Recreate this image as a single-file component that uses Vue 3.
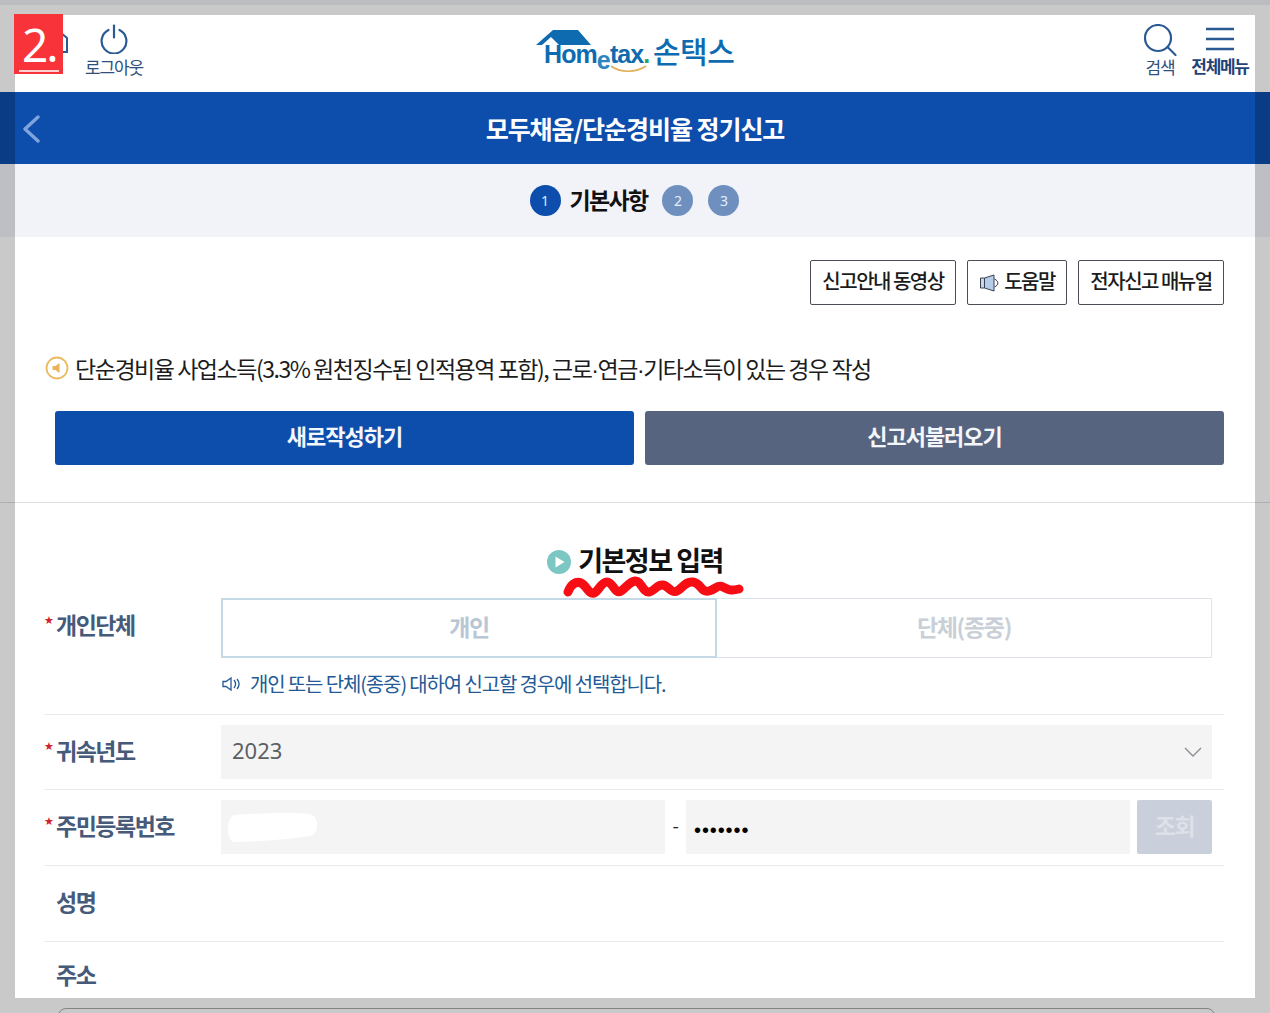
<script setup>
const guideButtons = [
  { label: '신고안내 동영상', width: 146 },
  { label: '도움말', width: 100, icon: true },
  { label: '전자신고 매뉴얼', width: 146 },
]
const steps = [2, 3]
</script>

<template>
  <div class="screen">
    <header class="top">
      <div class="top-left">
        <div class="tool home">
          <svg width="36" height="32" viewBox="0 0 36 32" fill="none" stroke="#2b5a93" stroke-width="2"><path d="M6 14 18 4l12 10v14H6z" /></svg>
        </div>
        <div class="tool logout">
          <svg width="28" height="30" viewBox="0 0 28 30" fill="none" stroke="#2b5a93" stroke-width="2.200" stroke-linecap="round"><path d="M8.500 6a12.400 12.400 0 1 0 11 0" /><path d="M14 1.500v12" /></svg>
          <span>로그아웃</span>
        </div>
      </div>
      <div class="logo">
        <svg class="roof" width="60" height="20" viewBox="0 0 60 20"><path d="M1 16 18 1h25l13 15H24l-8-8-9 8z" fill="#0f6bb0" /></svg>
        <span class="logo-word">Hom<i>e</i>tax<b>.</b></span>
        <svg class="smile" width="40" height="10" viewBox="0 0 40 10" fill="none"><path d="M2 2c9 7 25 7 35 0" stroke="#e3ae5a" stroke-width="1.600" /></svg>
        <span class="logo-ko">손택스</span>
      </div>
      <div class="top-right">
        <div class="tool search">
          <svg width="34" height="32" viewBox="0 0 34 32" fill="none" stroke="#2b5a93" stroke-width="2.200" stroke-linecap="round"><circle cx="15" cy="14" r="13" /><path d="m24.500 23 8 8" /></svg>
          <span>검색</span>
        </div>
        <div class="tool menu">
          <svg width="30" height="26" viewBox="0 0 30 26" stroke="#2b5a93" stroke-width="2.400"><path d="M1 3h28M1 13h28M1 23h28" /></svg>
          <span class="strong">전체메뉴</span>
        </div>
      </div>
    </header>

    <div class="titlebar">
      <svg class="back" width="18" height="30" viewBox="0 0 18 30" fill="none" stroke="#7ea3dd" stroke-width="3.400" stroke-linecap="round" stroke-linejoin="round"><path d="M16 3 3 15l13 12" /></svg>
      <h1>모두채움/단순경비율 정기신고</h1>
    </div>

    <div class="steps">
      <span class="dot active">1</span>
      <strong>기본사항</strong>
      <span v-for="n in steps" :key="n" class="dot">{{ n }}</span>
    </div>

    <div class="guide">
      <button v-for="b in guideButtons" :key="b.label" class="guide-btn" :style="{ width: b.width + 'px' }">
        <svg v-if="b.icon" class="guide-icon" width="22" height="22" viewBox="0 0 22 22"><path d="M1.500 6h4v10h-4z" fill="#c6d8ee" stroke="#3a4250" /><path d="M5.500 6 15 3v16l-9.500-3z" fill="#b5cdea" stroke="#3a4250" /><path d="M15.500 7c4.500 2 4.500 6 0 8" fill="none" stroke="#3a4250" /></svg>
        {{ b.label }}
      </button>
    </div>

    <p class="notice">
      <svg width="24" height="24" viewBox="0 0 24 24"><circle cx="12" cy="12" r="10.500" fill="#fff" stroke="#e9bb63" stroke-width="1.800" /><path d="M7.500 10h3l4-3v10l-4-3h-3z" fill="#e9b458" /></svg>
      <span>단순경비율 사업소득(3.3% 원천징수된 인적용역 포함), 근로<i class="mid">·</i>연금<i class="mid">·</i>기타소득이 있는 경우 작성</span>
    </p>

    <div class="actions">
      <button class="primary">새로작성하기</button>
      <button class="secondary">신고서불러오기</button>
    </div>

    <section class="form">
      <h2>
        <svg width="24" height="24" viewBox="0 0 24 24"><circle cx="12" cy="12" r="12" fill="#7cc7c3" /><path d="M8.500 6.500 17.500 12l-9 5.500z" fill="#fff" /></svg>
        기본정보 입력
        <svg class="squiggle" width="184" height="24" viewBox="0 0 184 24" fill="none"><path d="M5 16C8 8 13 5 18 7S26 19 31 17 38 6 44 6 52 19 58 15 66 6 72 5 80 17 86 16 94 8 100 9 108 18 114 15 122 5 130 6 138 17 146 15 154 8 160 11 168 15 176 13" stroke="#f70d14" stroke-width="9" stroke-linecap="round" stroke-linejoin="round" /></svg>
      </h2>

      <div class="row type-row">
        <label class="req">개인단체</label>
        <div class="field-col">
          <div class="toggle">
            <button class="on">개인</button>
            <button>단체(종중)</button>
          </div>
          <p class="hint">
            <svg width="20" height="16" viewBox="0 0 20 16" fill="none" stroke="#245a96" stroke-width="1.300"><path d="M2 5.500h3l5-3.500v12l-5-3.500H2z" /><path d="M13 4c2 2.500 2 5.500 0 8M16 3c2.500 3 2.500 7 0 10" /></svg>
            개인 또는 단체(종중) 대하여 신고할 경우에 선택합니다.
          </p>
        </div>
      </div>

      <div class="row">
        <label class="req">귀속년도</label>
        <div class="select">
          <span>2023</span>
          <svg width="20" height="12" viewBox="0 0 20 12" fill="none" stroke="#8a8f96" stroke-width="1.400"><path d="m2 2 8 8 8-8" /></svg>
        </div>
      </div>

      <div class="row tall">
        <label class="req">주민등록번호</label>
        <div class="id-fields">
          <div class="input first">
            <svg class="blot" width="92" height="32" viewBox="0 0 92 32"><path d="M6 4c24-2 60-3 76-1 10 2 11 17 2 22-22 3-54 6-78 6-7-6-7-20 0-27z" fill="#fff" /></svg>
          </div>
          <span class="dash">-</span>
          <div class="input second">•••••••</div>
          <button class="lookup">조회</button>
        </div>
      </div>

      <div class="row tall"><label>성명</label></div>
      <div class="row last"><label>주소</label></div>
    </section>

    <div class="bottom-outline"></div>

    <div class="scrim scrim-top"></div>
    <div class="scrim scrim-left"></div>
    <div class="scrim scrim-right"></div>
    <div class="scrim scrim-bottom"></div>
    <div class="top-band"></div>
    <div class="badge"><span>2.</span></div>
  </div>
</template>

<style>
html, body { margin: 0; overflow: hidden; background: #fff; }
</style>

<style scoped>
.screen {
  position: relative;
  width: 1270px;
  height: 1013px;
  overflow: hidden;
  background: #fff;
  font-family: "Noto Sans CJK KR", "Noto Sans", sans-serif;
  color: #1a1a1a;
}
button { font-family: inherit; cursor: pointer; }
.top {
  height: 92px;
  box-sizing: border-box;
  padding: 15px 15px 0;
  display: flex;
  align-items: center;
  justify-content: space-between;
  position: relative;
}
.top-left, .top-right { display: flex; height: 77px; }
.tool {
  display: flex;
  flex-direction: column;
  align-items: center;
  padding-top: 9px;
  font-size: 17px;
  line-height: 20px;
  letter-spacing: -1.100px;
  color: #2f4f7c;
  box-sizing: border-box;
  white-space: nowrap;
}
.tool svg { display: block; }
.home { width: 52px; margin-left: 14px; }
.logout { width: 64px; margin-left: 1px; padding-top: 9px; }
.logout span { margin-top: 3px; }
.search { width: 36px; margin-right: 12px; padding-top: 9px; }
.search span { margin-top: 1px; }
.menu { width: 60px; margin-right: 5px; padding-top: 11px; }
.menu span { margin-top: 4px; }
.strong { font-weight: 700; letter-spacing: -1.300px; color: #1f4278; }

.logo {
  position: absolute;
  left: 534px;
  top: 29px;
  width: 204px;
  height: 46px;
  color: #0f6bb0;
}
.roof { position: absolute; left: 1px; top: 0; }
.logo-word {
  position: absolute;
  left: 10px;
  top: 11px;
  font-family: "Liberation Sans", sans-serif;
  font-size: 25px;
  line-height: 28px;
  font-weight: 700;
  letter-spacing: -0.900px;
  white-space: nowrap;
}
.logo-word i { font-style: normal; position: relative; top: 6px; color: #2c85c0; }
.logo-word b { color: #2aa35f; }
.smile { position: absolute; left: 75px; top: 35px; }
.logo-ko {
  position: absolute;
  left: 119px;
  top: 1px;
  font-size: 30px;
  line-height: 40px;
  font-weight: 500;
  letter-spacing: -0.500px;
  white-space: nowrap;
}

.titlebar {
  height: 72px;
  background: #0d4dab;
  display: flex;
  align-items: center;
  justify-content: center;
  position: relative;
}
.back { position: absolute; left: 22px; top: 22px; }
h1 {
  margin: 0;
  font-size: 25px;
  font-weight: 700;
  letter-spacing: -1.050px;
  color: #fff;
  line-height: 1;
}

.steps {
  height: 73px;
  background: #f1f3f9;
  display: flex;
  align-items: center;
  justify-content: center;
  padding-right: 1px;
}
.dot {
  width: 31px;
  height: 31px;
  border-radius: 50%;
  background: #6f90bf;
  color: #e6edf7;
  font-size: 14px;
  display: flex;
  align-items: center;
  justify-content: center;
  margin-left: 15px;
  font-family: "Noto Sans", sans-serif;
}
.dot.active { background: #0d4dab; color: #dfe9f8; margin-left: 0; }
.steps strong {
  font-size: 23px;
  font-weight: 700;
  letter-spacing: -1.700px;
  color: #111;
  margin-left: 9px;
  padding-bottom: 4px;
}

.guide {
  display: flex;
  justify-content: flex-end;
  gap: 11px;
  padding: 23px 46px 0 0;
}
.guide-btn {
  height: 45px;
  box-sizing: border-box;
  background: #fff;
  border: 1px solid #4a4f57;
  border-radius: 2px;
  padding: 0 0 4px;
  font-size: 20px;
  font-weight: 500;
  letter-spacing: -1.500px;
  color: #1c1c1c;
  display: flex;
  align-items: center;
  justify-content: center;
  gap: 3px;
}
.guide-icon { margin-top: 4px; }

.notice {
  margin: 44px 0 0 45px;
  height: 38px;
  display: flex;
  align-items: center;
  gap: 6px;
  font-size: 23px;
  letter-spacing: -1.470px;
  color: #1c1c1c;
  white-space: nowrap;
}
.mid {
  font-style: normal;
  font-family: "Liberation Sans", sans-serif;
}

.actions {
  display: flex;
  gap: 11px;
  padding: 24px 46px 0 55px;
  box-sizing: border-box;
  height: 78px;
}
.actions button {
  flex: 1;
  height: 54px;
  border: 0;
  border-radius: 3px;
  color: #f3f6fb;
  font-size: 22px;
  font-weight: 700;
  letter-spacing: -1px;
  padding: 0 0 7px;
}
.primary { background: #0d4dab; }
.secondary { background: #56647f; }

.form {
  margin-top: 37px;
  border-top: 1px solid #d9dee2;
  padding: 0 46px 0 44px;
}
h2 {
  position: relative;
  margin: 37px 0 0;
  height: 58px;
  box-sizing: border-box;
  padding-left: 2px;
  display: flex;
  justify-content: center;
  align-items: flex-start;
  gap: 7px;
  font-size: 27px;
  line-height: 40px;
  font-weight: 700;
  letter-spacing: -1.500px;
  color: #111;
}
h2 > svg:first-child { margin-top: 10px; }
.squiggle { position: absolute; left: 519px; top: 36px; }

.row {
  display: flex;
  align-items: center;
  border-bottom: 1px solid #e9ebee;
  min-height: 75px;
  box-sizing: border-box;
}
.tall { min-height: 76px; }
.row label {
  width: 177px;
  flex: none;
  font-size: 23px;
  font-weight: 700;
  letter-spacing: -1.500px;
  color: #465a7a;
  padding: 0 0 5px 12px;
  box-sizing: border-box;
  position: relative;
}
.req::before {
  content: "★";
  position: absolute;
  left: 0;
  top: 7px;
  color: #d3202c;
  font-size: 11px;
  letter-spacing: 0;
  font-family: "DejaVu Sans", sans-serif;
}
.type-row { align-items: flex-start; height: 117px; }
.type-row label { margin-top: 9px; }
.field-col { flex: 1; margin-right: 12px; }
.toggle { display: flex; height: 60px; }
.toggle button {
  flex: 1;
  background: #fff;
  border: 1px solid #dfe4ea;
  border-left: 0;
  color: #c9cfd7;
  font-size: 23px;
  font-weight: 700;
  letter-spacing: -1.300px;
  padding: 0 0 4px;
}
.toggle button.on {
  border: 2px solid #c5d8e6;
  color: #b9c6d4;
  flex: 0 0 496px;
}
.hint {
  margin: 13px 0 0;
  display: flex;
  align-items: center;
  gap: 9px;
  font-size: 20px;
  line-height: 26px;
  letter-spacing: -1.140px;
  color: #245a96;
}

.select {
  flex: 1;
  height: 54px;
  margin-right: 12px;
  background: #f4f4f5;
  display: flex;
  align-items: center;
  justify-content: space-between;
  padding: 0 9px 0 11px;
  font-size: 22px;
  color: #5c5f64;
  font-family: "Noto Sans", sans-serif;
}
.select span { padding-bottom: 5px; }

.id-fields {
  flex: 1;
  display: flex;
  align-items: center;
  margin-right: 12px;
  padding-bottom: 1px;
}
.input {
  height: 54px;
  background: #f4f4f5;
  box-sizing: border-box;
  display: flex;
  align-items: center;
  position: relative;
}
.first { width: 444px; }
.blot { position: absolute; left: 6px; top: 11px; }
.dash { width: 21px; text-align: center; font-size: 18px; color: #222; padding-bottom: 5px; }
.second {
  width: 444px;
  padding: 6px 0 0 8px;
  font-size: 20px;
  letter-spacing: 0.900px;
  color: #000;
  font-family: "Liberation Sans", sans-serif;
}
.lookup {
  width: 75px;
  height: 54px;
  margin-left: 7px;
  border: 0;
  border-radius: 2px;
  background: #c9d0db;
  color: #dde1e8;
  font-size: 23px;
  font-weight: 700;
  letter-spacing: -1.300px;
  padding: 0 0 4px;
}
.last { border-bottom: 0; min-height: 68px; }

.bottom-outline {
  position: absolute;
  left: 58px;
  right: 55px;
  top: 1008px;
  height: 20px;
  box-sizing: border-box;
  border: 1px solid #a8a8a8;
  border-radius: 8px;
  background: #fff;
}
.scrim { position: absolute; background: rgba(0, 0, 0, 0.21); }
.scrim-top { left: 0; right: 0; top: 0; height: 15px; }
.scrim-left { left: 0; width: 15px; top: 15px; height: 983px; }
.scrim-right { right: 0; width: 15px; top: 15px; height: 983px; }
.scrim-bottom { left: 0; right: 0; top: 998px; bottom: 0; }
.top-band {
  position: absolute;
  left: 0;
  right: 0;
  top: 0;
  height: 5px;
  background: #bcbdc1;
}
.badge {
  position: absolute;
  left: 14px;
  top: 14px;
  width: 49px;
  height: 60px;
  background: #f8333a;
  color: #fff;
  overflow: hidden;
}
.badge span {
  display: block;
  width: 40px;
  margin-left: 5px;
  padding-left: 3px;
  box-sizing: border-box;
  height: 58px;
  border-bottom: 2px solid #fbd0d0;
  font-family: "Noto Sans", sans-serif;
  font-size: 46px;
  line-height: 60px;
  letter-spacing: -2px;
  white-space: nowrap;
}
</style>
